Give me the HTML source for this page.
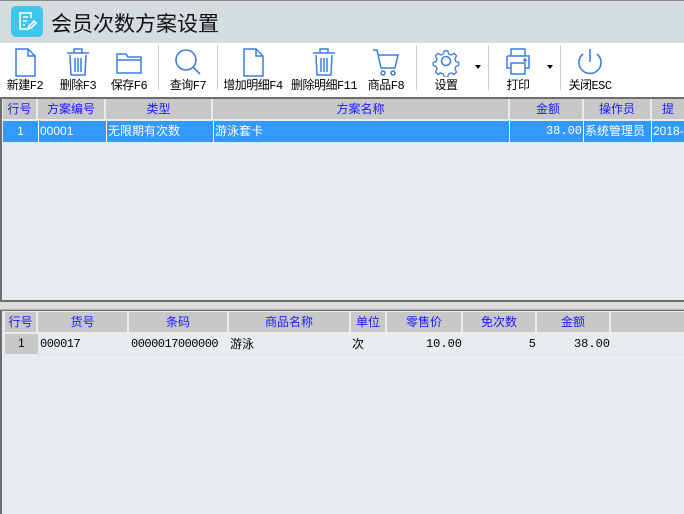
<!DOCTYPE html>
<html><head><meta charset="utf-8"><style>
*{margin:0;padding:0;box-sizing:border-box}
body{width:684px;height:514px;overflow:hidden;background:#e9ecef;font-family:"Liberation Sans","Noto Sans CJK SC",sans-serif;position:relative}
.a{position:absolute}
.title{left:0;top:0;width:684px;height:43px;background:#d4dcdf;border-top:1px solid #888}
.tb{left:0;top:43px;width:684px;height:54px;background:#fff}
.btn{position:absolute;top:0;height:54px;text-align:center;font-size:12px;color:#000}
.btn svg{position:absolute;top:4px;left:50%;margin-left:-14px}
.btn span{position:absolute;top:33px;left:-10px;right:-10px;white-space:nowrap;font-family:"Liberation Mono","Noto Sans CJK SC",monospace;font-size:12px;letter-spacing:-0.5px}
.sep{position:absolute;top:2px;width:1px;height:45px;background:#ccc}
.h{position:absolute;height:20px;background:#c8c8c8;color:#1a1aff;font-size:12px;text-align:center;line-height:20px;border-right:2px solid #e9ecef}
.c{position:absolute;font-size:12px;line-height:20px;white-space:nowrap;overflow:hidden}
</style></head><body>
<div class="a title"></div>
<div class="a" style="left:11px;top:6px;width:32px;height:31px;background:#3ec6ef;border-radius:5px"></div>
<svg class="a" style="left:17px;top:10px" width="20" height="22" viewBox="0 0 20 22" fill="none" stroke="#fff" stroke-width="1.6"><path d="M14 8V3H3v16h7"/><path d="M6 7h5M6 11h4M6 15h2"/><path d="M11 19l1-3 5-5 2 2-5 5z"/></svg>
<div class="a" style="left:51px;top:8px;font-size:21px;color:#111">会员次数方案设置</div>
<div class="a tb"></div>
<div class="a" style="left:0;top:43px;width:684px;height:54px">
<div class="btn" style="left:4px;width:42px"><svg width="28" height="30" viewBox="0 0 28 30" fill="none" stroke="#3d7de0" stroke-width="1.5"><path d="M5 2h12l7 7v20H5z M17 2v7h7"/></svg><span>新建F2</span></div>
<div class="btn" style="left:56px;width:44px"><svg width="28" height="30" viewBox="0 0 28 30" fill="none" stroke="#3d7de0" stroke-width="1.5"><path d="M3 6h22M10 6V2h8v4M6 8l1 20h14l1-20M11 11v14M14 11v14M17 11v14"/></svg><span>删除F3</span></div>
<div class="btn" style="left:108px;width:42px"><svg width="28" height="30" viewBox="0 0 28 30" fill="none" stroke="#3d7de0" stroke-width="1.5"><path d="M2 7h9l2 3h13v16H2z M2 13h24"/></svg><span>保存F6</span></div>
<div class="sep" style="left:158px"></div>
<div class="btn" style="left:166px;width:44px"><svg width="28" height="30" viewBox="0 0 28 30" fill="none" stroke="#3d7de0" stroke-width="1.6"><circle cx="12" cy="13" r="10"/><path d="M19 20l7 7"/></svg><span>查询F7</span></div>
<div class="sep" style="left:217px"></div>
<div class="btn" style="left:222px;width:62px"><svg width="28" height="30" viewBox="0 0 28 30" fill="none" stroke="#3d7de0" stroke-width="1.5"><path d="M5 2h12l7 7v20H5z M17 2v7h7"/></svg><span>增加明细F4</span></div>
<div class="btn" style="left:290px;width:68px"><svg width="28" height="30" viewBox="0 0 28 30" fill="none" stroke="#3d7de0" stroke-width="1.5"><path d="M3 6h22M10 6V2h8v4M6 8l1 20h14l1-20M11 11v14M14 11v14M17 11v14"/></svg><span>删除明细F11</span></div>
<div class="btn" style="left:366px;width:40px"><svg width="28" height="30" viewBox="0 0 28 30" fill="none" stroke="#3d7de0" stroke-width="1.5"><path d="M1 3h4l4 18h14l3-13H7"/><circle cx="11" cy="26" r="2"/><circle cx="21" cy="26" r="2"/></svg><span>商品F8</span></div>
<div class="sep" style="left:416px"></div>
<div class="btn" style="left:426px;width:40px"><svg width="28" height="30" viewBox="0 0 28 30" fill="none" stroke="#3d7de0" stroke-width="1.5"><circle cx="14" cy="14" r="4.5"/><path d="M12 2h4l1 3.5 3 1.5 3.5-2 3 3-2 3.5 1 3 3.5 1v4l-3.5 1-1 3 2 3.5-3 3-3.5-2-3 1.5-1 3.5h-4l-1-3.5-3-1.5-3.5 2-3-3 2-3.5-1-3-3.5-1v-4l3.5-1 1-3-2-3.5 3-3 3.5 2 3-1.5z" transform="translate(14,14) scale(0.85) translate(-14,-14)"/></svg><span>设置</span></div>
<div class="a" style="left:475px;top:22px;border:3px solid transparent;border-top:4px solid #000"></div>
<div class="sep" style="left:488px"></div>
<div class="btn" style="left:498px;width:40px"><svg width="28" height="30" viewBox="0 0 28 30" fill="none" stroke="#3d7de0" stroke-width="1.5"><path d="M7 9V2h14v7M3 9h22v12h-4M7 21H3V9M7 16h14v11H7z"/><circle cx="21" cy="13" r="1"/></svg><span>打印</span></div>
<div class="a" style="left:547px;top:22px;border:3px solid transparent;border-top:4px solid #000"></div>
<div class="sep" style="left:560px"></div>
<div class="btn" style="left:568px;width:44px"><svg width="28" height="30" viewBox="0 0 28 30" fill="none" stroke="#3d7de0" stroke-width="1.6"><path d="M14 2v13"/><path d="M7 7a11 11 0 1 0 14 0"/></svg><span>关闭ESC</span></div>
</div>
<!-- top grid -->
<div class="a" style="left:0;top:97px;width:684px;height:2px;background:#6d6d6d"></div>
<div class="a" style="left:0;top:97px;width:2px;height:205px;background:#6d6d6d"></div>
<div class="h" style="left:3px;top:99px;width:35px">行号</div>
<div class="h" style="left:38px;top:99px;width:68px">方案编号</div>
<div class="h" style="left:106px;top:99px;width:107px">类型</div>
<div class="h" style="left:213px;top:99px;width:297px">方案名称</div>
<div class="h" style="left:510px;top:99px;width:74px;text-align:right;padding-right:22px">金额</div>
<div class="h" style="left:584px;top:99px;width:68px">操作员</div>
<div class="h" style="left:652px;top:99px;width:32px;border:0">提</div>
<div class="a" style="left:3px;top:121px;width:681px;height:21px;background:#3399ff"></div>
<div class="c" style="left:3px;top:121px;width:35px;text-align:center;color:#fff">1</div>
<div class="c" style="left:40px;top:121px;color:#fff">00001</div>
<div class="a" style="left:38px;top:121px;width:1px;height:21px;background:#fff"></div>
<div class="a" style="left:106px;top:121px;width:1px;height:21px;background:#fff"></div>
<div class="a" style="left:213px;top:121px;width:1px;height:21px;background:#fff"></div>
<div class="a" style="left:509px;top:121px;width:1px;height:21px;background:#fff"></div>
<div class="a" style="left:583px;top:121px;width:1px;height:21px;background:#fff"></div>
<div class="a" style="left:651px;top:121px;width:1px;height:21px;background:#fff"></div>
<div class="c" style="left:108px;top:121px;color:#fff">无限期有次数</div>
<div class="c" style="left:215px;top:121px;color:#fff">游泳套卡</div>
<div class="c" style="left:510px;top:121px;width:72px;text-align:right;color:#fff;font-family:'Liberation Mono',monospace">38.00</div>
<div class="c" style="left:585px;top:121px;color:#fff">系统管理员</div>
<div class="c" style="left:653px;top:121px;width:31px;color:#fff">2018-0</div>
<!-- splitter -->
<div class="a" style="left:0;top:300px;width:684px;height:2px;background:#6d6d6d"></div>
<div class="a" style="left:0;top:302px;width:684px;height:8px;background:#dcdcdc;border-bottom:1px solid #b5b5b5"></div>
<div class="a" style="left:0;top:310px;width:684px;height:1px;background:#6d6d6d"></div>
<div class="a" style="left:0;top:310px;width:2px;height:204px;background:#6d6d6d"></div>
<!-- bottom grid -->
<div class="h" style="left:5px;top:312px;width:33px">行号</div>
<div class="h" style="left:38px;top:312px;width:91px">货号</div>
<div class="h" style="left:129px;top:312px;width:100px">条码</div>
<div class="h" style="left:229px;top:312px;width:122px">商品名称</div>
<div class="h" style="left:351px;top:312px;width:36px">单位</div>
<div class="h" style="left:387px;top:312px;width:76px">零售价</div>
<div class="h" style="left:463px;top:312px;width:74px">免次数</div>
<div class="h" style="left:537px;top:312px;width:74px">金额</div>
<div class="h" style="left:611px;top:312px;width:73px;border:0"></div>
<div class="a" style="left:5px;top:334px;width:33px;height:20px;background:#c8c8c8"></div>
<div class="c" style="left:5px;top:333px;width:33px;text-align:center">1</div>
<div class="c" style="left:40px;top:334px;font-family:'Liberation Mono',monospace;letter-spacing:-0.5px">000017</div>
<div class="c" style="left:131px;top:334px;font-family:'Liberation Mono',monospace;letter-spacing:-0.5px">0000017000000</div>
<div class="c" style="left:230px;top:334px">游泳</div>
<div class="c" style="left:352px;top:334px">次</div>
<div class="c" style="left:387px;top:334px;width:75px;text-align:right;font-family:'Liberation Mono',monospace">10.00</div>
<div class="c" style="left:463px;top:334px;width:73px;text-align:right;font-family:'Liberation Mono',monospace">5</div>
<div class="c" style="left:537px;top:334px;width:73px;text-align:right;font-family:'Liberation Mono',monospace">38.00</div>
<div class="a" style="left:38px;top:354px;width:646px;height:1px;background:#dfe2e5"></div>
</body></html>
